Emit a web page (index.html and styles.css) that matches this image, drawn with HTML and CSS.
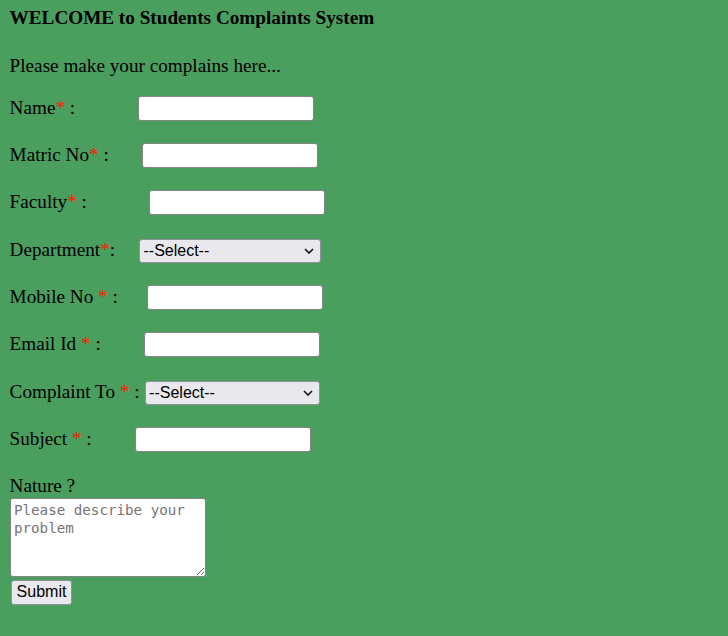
FILE: index.html
```html
<!DOCTYPE html>
<html lang="en">
<head>
<meta charset="utf-8">
<title>Students Complaints System</title>
<link rel="stylesheet" href="styles.css">
</head>
<body>
<main class="page">
  <h1 class="title">WELCOME to Students Complaints System</h1>
  <p class="intro">Please make your complains here...</p>
  <form class="form">
    <div class="row">
      <label class="lbl lbl-name">Name<span class="req">*</span> :</label>
      <input class="field" type="text">
    </div>
    <div class="row">
      <label class="lbl lbl-matric">Matric No<span class="req">*</span> :</label>
      <input class="field" type="text">
    </div>
    <div class="row">
      <label class="lbl lbl-faculty">Faculty<span class="req">*</span> :</label>
      <input class="field" type="text">
    </div>
    <div class="row">
      <label class="lbl lbl-dept">Department<span class="req">*</span>:</label>
      <div class="select-wrap select-dept">
        <select class="choice"><option>--Select--</option></select>
        <svg class="chev" width="10" height="6" viewBox="0 0 10 6"><path d="M1 1 L5 5 L9 1" fill="none" stroke="#111" stroke-width="1.6"/></svg>
      </div>
    </div>
    <div class="row">
      <label class="lbl lbl-mobile">Mobile No <span class="req">*</span> :</label>
      <input class="field" type="text">
    </div>
    <div class="row">
      <label class="lbl lbl-email">Email Id <span class="req">*</span> :</label>
      <input class="field" type="text">
    </div>
    <div class="row">
      <label class="lbl lbl-to">Complaint To <span class="req">*</span> :</label>
      <div class="select-wrap select-to">
        <select class="choice"><option>--Select--</option></select>
        <svg class="chev" width="10" height="6" viewBox="0 0 10 6"><path d="M1 1 L5 5 L9 1" fill="none" stroke="#111" stroke-width="1.6"/></svg>
      </div>
    </div>
    <div class="row">
      <label class="lbl lbl-subject">Subject <span class="req">*</span> :</label>
      <input class="field" type="text">
    </div>
    <div class="nature">
      <label class="nature-label">Nature ?</label>
      <textarea class="desc" placeholder="Please describe your problem"></textarea>
      <button class="submit" type="button">Submit</button>
    </div>
  </form>
</main>
</body>
</html>
```

FILE: styles.css
```css
html, body {
  margin: 0;
  padding: 0;
  background: #4a9e5e;
}

.page {
  padding: 7px 10px 0 9.6px;
  font-family: "Liberation Serif", "Times New Roman", serif;
  font-size: 19.2px;
  color: #000;
}

.title {
  margin: 0;
  font-size: 19.2px;
  font-weight: bold;
}

.intro {
  margin: 25.75px 0 0 0;
}

.form {
  margin-top: 18.75px;
  display: flex;
  flex-direction: column;
  gap: 22.4px;
}

.row {
  display: flex;
  align-items: flex-start;
  height: 25px;
}

.lbl {
  flex-shrink: 0;
  white-space: nowrap;
  line-height: 24.5px;
}

.req {
  color: #ff1a00;
}

.lbl-name { width: 128.5px; }
.lbl-matric { width: 132.5px; }
.lbl-faculty { width: 139.5px; }
.lbl-dept { width: 129.9px; }
.lbl-mobile { width: 137.5px; }
.lbl-email { width: 134.5px; }
.lbl-to { width: 135.5px; }
.lbl-subject { width: 125.9px; }

.field {
  box-sizing: border-box;
  width: 176px;
  height: 25px;
  margin: 0;
  padding: 1px 3px;
  border: 1px solid #858585;
  border-radius: 3px;
  background: #fff;
  font-family: "Liberation Sans", Arial, sans-serif;
  font-size: 16px;
}

.select-wrap {
  position: relative;
  height: 24px;
  margin-top: 1px;
}

.select-dept { width: 182px; }
.select-to { width: 175px; margin-top: 1.5px; }

.choice {
  appearance: none;
  -webkit-appearance: none;
  box-sizing: border-box;
  width: 100%;
  height: 24px;
  margin: 0;
  padding: 0 0 0 3px;
  border: 1px solid #8f8f9d;
  border-radius: 3px;
  background: #e9e9ed;
  color: #000;
  font-family: "Liberation Sans", Arial, sans-serif;
  font-size: 16px;
  line-height: 22px;
}

.chev {
  position: absolute;
  right: 7px;
  top: 9px;
  pointer-events: none;
}

.nature {
  display: flex;
  flex-direction: column;
  align-items: flex-start;
}

.nature-label {
  line-height: normal;
}

.desc {
  box-sizing: border-box;
  width: 196px;
  height: 79px;
  margin: 1.5px 0 0 0.4px;
  padding: 2px 3px;
  border: 1px solid #858585;
  border-radius: 3px;
  background: #fff;
  font-family: "DejaVu Sans Mono", "Liberation Mono", monospace;
  font-size: 14.2px;
  line-height: 18px;
  resize: both;
}

.desc::placeholder {
  color: #757575;
}

.submit {
  box-sizing: border-box;
  height: 25px;
  margin: 2.5px 0 0 1px;
  padding: 0 5px;
  border: 1px solid #8f8f9d;
  border-radius: 3px;
  background: #e9e9ed;
  color: #000;
  font-family: "Liberation Sans", Arial, sans-serif;
  font-size: 16px;
  line-height: 22px;
}
```
